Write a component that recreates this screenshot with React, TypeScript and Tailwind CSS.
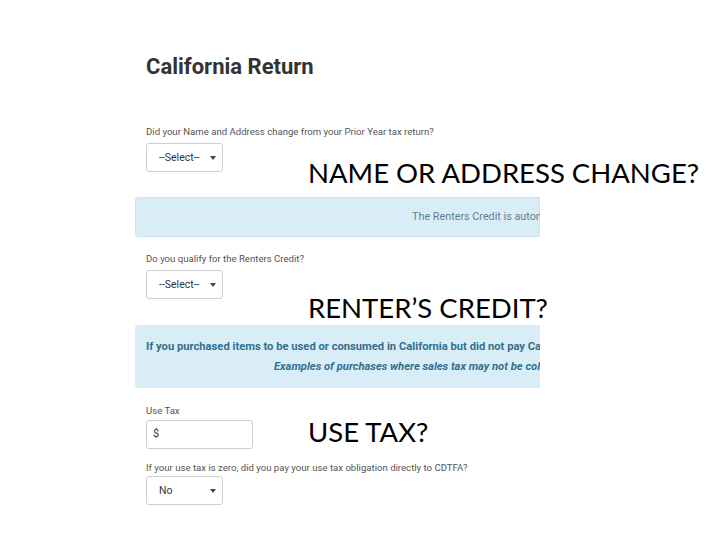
import React from 'react';

const ui = { fontFamily: 'Roboto, "Liberation Sans", sans-serif' };
const slide = { fontFamily: 'Lato, "Open Sans", sans-serif' };

const Caret = () => (
  <svg width="6" height="4" viewBox="0 0 6 4" className="shrink-0">
    <path d="M0 0 L6 0 L3 4 Z" fill="#444" />
  </svg>
);

const SelectBox = ({ value }: { value: string }) => (
  <div className="w-[77px] h-[29px] border border-[#cfcfcf] rounded-[3px] flex items-center justify-between pl-[12px] pr-[6px] text-[10.5px] text-[#333] bg-white">
    <span>{value}</span>
    <Caret />
  </div>
);

const FieldLabel = ({ children }: { children: React.ReactNode }) => (
  <p className="text-[9.6px] leading-[12px] text-[#555] whitespace-nowrap">{children}</p>
);

export default function App() {
  return (
    <div className="relative w-[720px] h-[540px] bg-white overflow-hidden">
      <div className="ml-[135px] w-[405px] overflow-hidden" style={ui}>
        <h1 className="pl-[11px] pt-[53px] text-[22px] leading-[28px] font-bold text-[#333]">California Return</h1>

        <div className="pl-[11px] pt-[45px]">
          <FieldLabel>Did your Name and Address change from your Prior Year tax return?</FieldLabel>
          <div className="mt-[5px]">
            <SelectBox value="--Select--" />
          </div>
        </div>

        <div className="mt-[25px] h-[40px] bg-[#d9edf7] border border-[#cde4ee] rounded-l-[3px] flex items-center pl-[276px]">
          <span className="whitespace-nowrap text-[10.8px] text-[#5f7f90]">The Renters Credit is automatically calculated for you</span>
        </div>

        <div className="pl-[11px] pt-[16px]">
          <FieldLabel>Do you qualify for the Renters Credit?</FieldLabel>
          <div className="mt-[5px]">
            <SelectBox value="--Select--" />
          </div>
        </div>

        <div className="mt-[26px] h-[63px] bg-[#d9edf7] rounded-l-[3px] flex flex-col justify-center gap-[6px] text-[11.2px] leading-[14px] text-[#31708f] font-bold whitespace-nowrap">
          <p className="pl-[11px]">If you purchased items to be used or consumed in California but did not pay California sales tax</p>
          <p className="pl-[139px] italic">Examples of purchases where sales tax may not be collected</p>
        </div>

        <div className="pl-[11px] pt-[17px]">
          <FieldLabel>Use Tax</FieldLabel>
          <div className="mt-[3px] w-[107px] h-[29px] border border-[#cfcfcf] rounded-[3px] flex items-center pl-[6px] text-[11px] text-[#333]">
            $
          </div>
          <div className="mt-[13px]">
            <FieldLabel>If your use tax is zero, did you pay your use tax obligation directly to CDTFA?</FieldLabel>
          </div>
          <div className="mt-[2px]">
            <SelectBox value="No" />
          </div>
        </div>
      </div>

      <div className="absolute left-[308px] top-[156px] text-[27.5px] leading-[34px] text-black whitespace-nowrap" style={slide}>
        NAME OR ADDRESS CHANGE?
      </div>
      <div className="absolute left-[308px] top-[291px] text-[27.5px] leading-[34px] text-black whitespace-nowrap" style={slide}>
        RENTER’S CREDIT?
      </div>
      <div className="absolute left-[308px] top-[415px] text-[27.5px] leading-[34px] text-black whitespace-nowrap" style={slide}>
        USE TAX?
      </div>
    </div>
  );
}
